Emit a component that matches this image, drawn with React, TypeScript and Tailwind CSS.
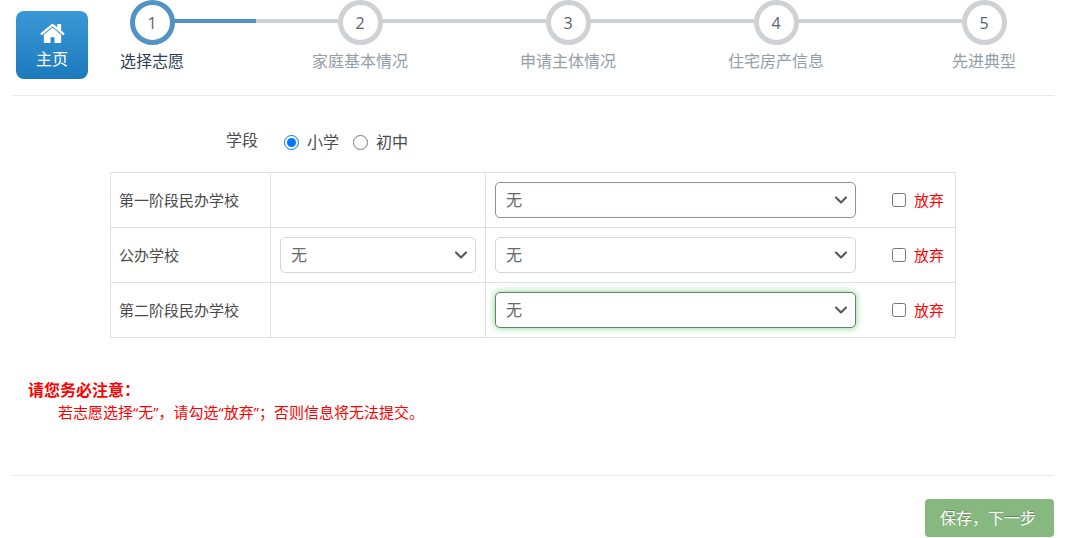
import { useState } from 'react';
import { ChevronDown } from 'lucide-react';
import clsx from 'clsx';

const steps = ['选择志愿', '家庭基本情况', '申请主体情况', '住宅房产信息', '先进典型'];

const rows = [
  { id: 'private1', label: '第一阶段民办学校', hasArea: false, look: 'valid' },
  { id: 'public', label: '公办学校', hasArea: true, look: 'normal' },
  { id: 'private2', label: '第二阶段民办学校', hasArea: false, look: 'focus' },
];

function HomeIcon() {
  return (
    <svg viewBox="0 0 1664 1792" className="h-[27px] w-[25px]" fill="currentColor" aria-hidden="true">
      <path d="M1408 992v480q0 26-19 45t-45 19h-384v-384h-256v384h-384q-26 0-45-19t-19-45v-480q0-1 .5-3t.5-3l575-474 575 474q1 2 1 6zm223-69l-62 74q-8 9-21 11h-3q-13 0-21-7l-692-577-692 577q-12 8-24 7-13-2-21-11l-62-74q-8-10-7-23.5t11-21.5l719-599q32-26 76-26t76 26l244 204v-195q0-14 9-23t23-9h192q14 0 23 9t9 23v408l219 182q10 8 11 21.5t-7 23.5z" />
    </svg>
  );
}

// Each step after the first draws the line that leads up to it
function Step({ index, label, active }: { index: number; label: string; active: boolean }) {
  return (
    <li className={clsx('flex', index > 1 && 'flex-1')} aria-current={active ? 'step' : undefined}>
      {index > 1 && (
        <div className="mt-[19px] flex h-1 flex-1 bg-[#ced1d6]">
          {index === 2 && <div className="w-1/2 bg-[#5293c4]" />}
        </div>
      )}
      <div className="flex w-11 shrink-0 flex-col items-center">
        <span
          className={clsx(
            'flex h-[45px] w-[45px] shrink-0 items-center justify-center rounded-full border-[5px] bg-white text-base text-[#546474]',
            active ? 'border-[#5293c4]' : 'border-[#ced1d6]'
          )}
        >
          {index}
        </span>
        <span
          className={clsx(
            'mt-1 text-base leading-6 whitespace-nowrap',
            active ? 'text-[#2b3d53]' : 'text-[#949ea7]'
          )}
        >
          {label}
        </span>
      </div>
    </li>
  );
}

function SchoolSelect({ label, look = 'normal' }: { label: string; look?: string }) {
  return (
    <div className="relative flex-1">
      <select
        aria-label={label}
        className={clsx(
          'block h-9 w-full appearance-none rounded-[5px] border bg-white px-[10px] text-base text-[#696969] outline-none',
          look === 'normal' && 'border-[#d5d5d5]',
          look === 'valid' && 'border-[#7ba07c]',
          look === 'focus' && 'border-[#5f8562] shadow-[0_0_6px_1px_#a3d9a5]'
        )}
      >
        <option>无</option>
      </select>
      <ChevronDown
        size={20}
        strokeWidth={2.5}
        className="pointer-events-none absolute top-2 right-[5px] text-[#555]"
      />
    </div>
  );
}

export default function App() {
  const [stage, setStage] = useState('primary');

  return (
    <main className="bg-white pr-[23px] pl-3 font-['Open_Sans','Noto_Sans_CJK_SC',sans-serif] text-[#4a4a4a]">
      <header className="flex h-[96px] items-start border-b border-[#eaeaea]">
        <button
          type="button"
          className="mt-[11px] ml-1 flex h-[68px] w-[72px] shrink-0 flex-col items-center justify-center rounded-lg bg-linear-to-b from-[#3b98d6] to-[#1b7abd] text-base leading-6 text-white"
        >
          <HomeIcon />
          主页
        </button>

        <ol className="mr-12 ml-[42px] flex flex-1">
          {steps.map((label, i) => (
            <Step key={label} index={i + 1} label={label} active={i === 0} />
          ))}
        </ol>
      </header>

      <section className="px-[98px] pt-8">
        <fieldset className="flex items-center text-base leading-6">
          <legend className="float-left w-[148px] pb-1 text-right">学段</legend>
          <label className="ml-[26px] flex items-center gap-2">
            <input
              type="radio"
              name="stage"
              className="h-[15px] w-[15px]"
              checked={stage === 'primary'}
              onChange={() => setStage('primary')}
            />
            小学
          </label>
          <label className="ml-[14px] flex items-center gap-2">
            <input
              type="radio"
              name="stage"
              className="h-[15px] w-[15px]"
              checked={stage === 'junior'}
              onChange={() => setStage('junior')}
            />
            初中
          </label>
        </fieldset>

        <table className="mt-4 w-full table-fixed border-collapse text-[15px]">
          <colgroup>
            <col className="w-[160px]" />
            <col className="w-[215px]" />
            <col />
          </colgroup>
          <tbody>
            {rows.map(row => (
              <tr key={row.id} className="h-[55px]">
                <th scope="row" className="border border-[#e0e0e0] pr-2 pl-2 text-left font-normal">
                  {row.label}
                </th>
                <td className="border border-[#e0e0e0] px-[9px]">
                  {row.hasArea && <SchoolSelect label={`${row.label}区域`} />}
                </td>
                <td className="border border-[#e0e0e0] pr-[11px] pl-[9px]">
                  <div className="flex items-center">
                    <SchoolSelect label={row.label} look={row.look} />
                    <label className="ml-9 flex items-center gap-2 text-[#ff0000]">
                      <input type="checkbox" name={row.id} className="h-[14px] w-[14px]" />
                      放弃
                    </label>
                  </div>
                </td>
              </tr>
            ))}
          </tbody>
        </table>
      </section>

      <section className="mt-10 pl-4 text-[#ff0000]">
        <h2 className="text-base leading-6 font-bold">请您务必注意：</h2>
        <p className="pl-[30px] text-[15px] leading-5">
          若志愿选择“无”，请勾选“放弃”；否则信息将无法提交。
        </p>
      </section>

      <footer className="mt-[53px] flex justify-end border-t border-[#eaeaea] pt-[23px]">
        <button
          type="submit"
          className="h-[38px] rounded bg-[#87b87f] pr-[18px] pl-[15px] text-base text-white [text-shadow:0_-1px_0_rgba(0,0,0,0.25)]"
        >
          保存，下一步
        </button>
      </footer>
    </main>
  );
}
